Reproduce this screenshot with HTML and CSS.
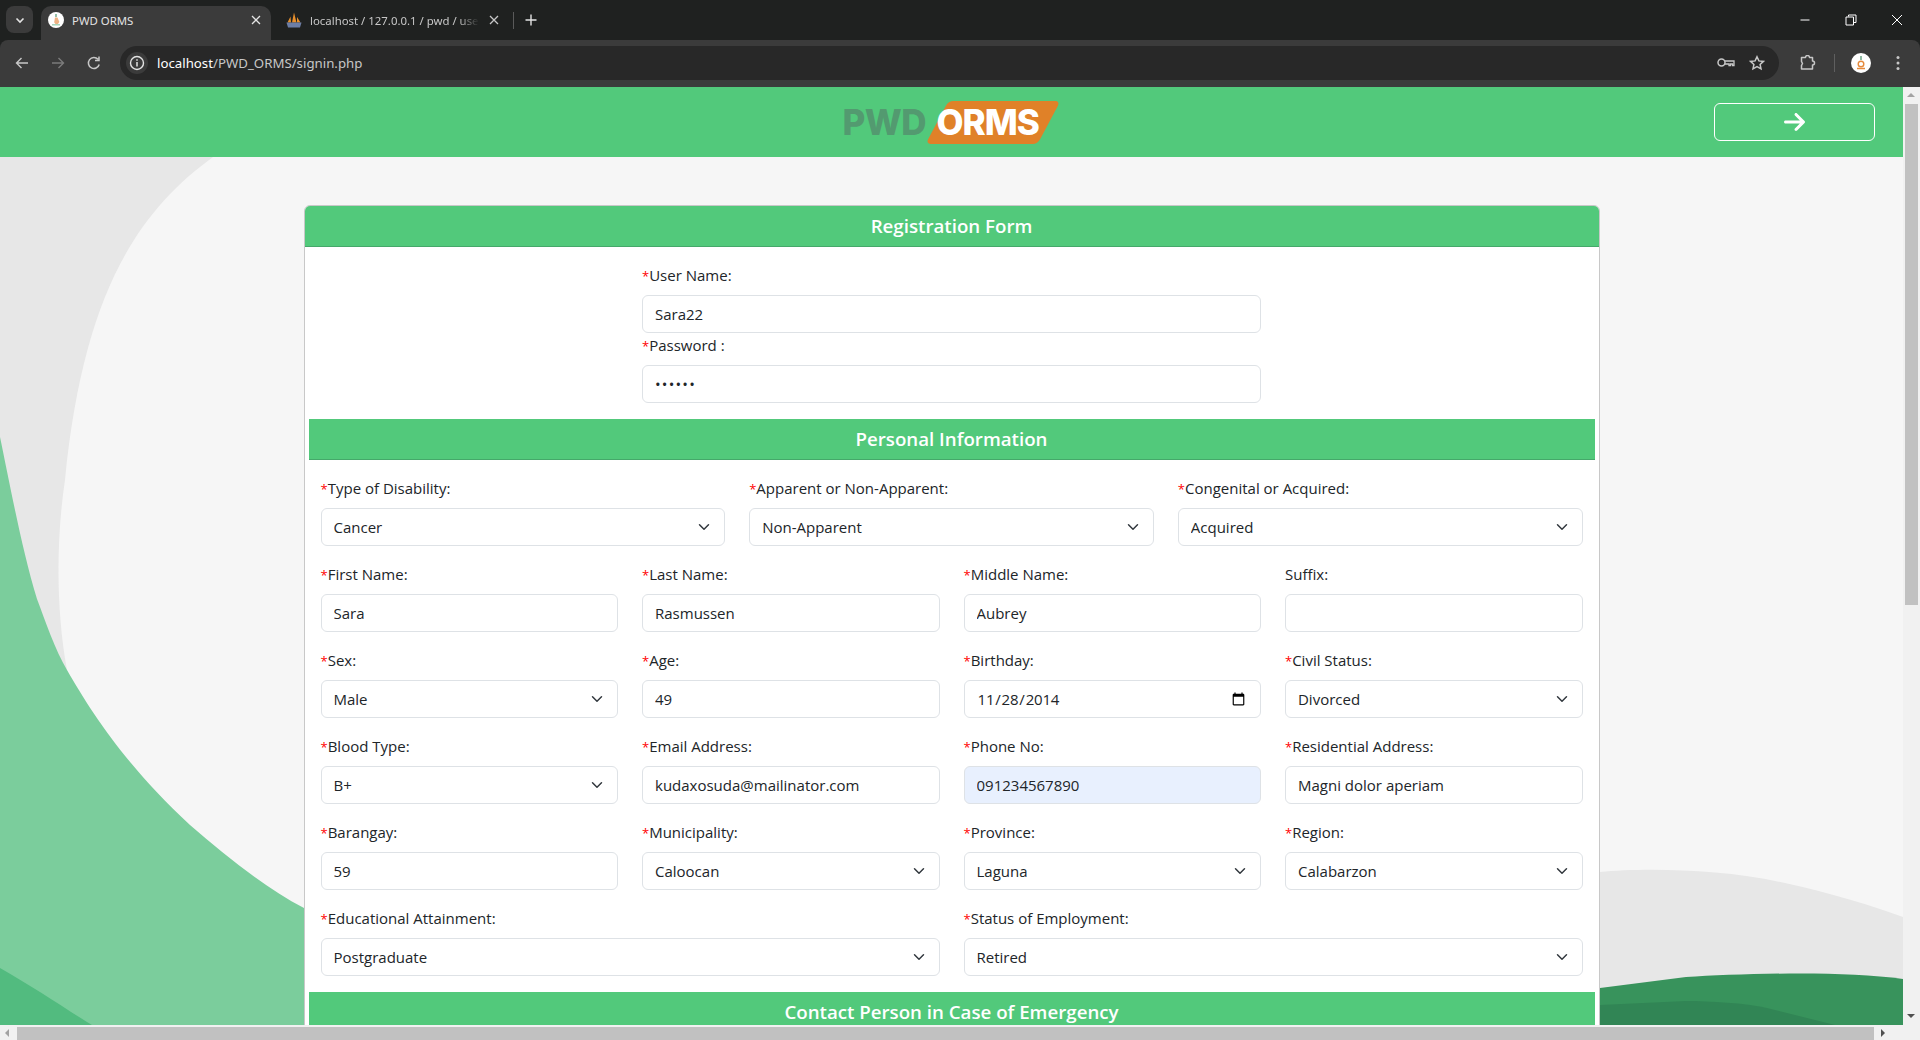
FILE: index.html
```html
<!DOCTYPE html>
<html lang="en">
<head>
    <meta charset="UTF-8">
    <title>PWD ORMS</title>
    <link rel="stylesheet" href="styles.css">
</head>
<body>
<div class="browser">

    <div class="tabstrip">
        <div class="tab-search">
            <svg width="12" height="12" viewBox="0 0 12 12"><path d="M2.5 4.5 6 8l3.5-3.5" fill="none" stroke="#e3e3e3" stroke-width="1.6"/></svg>
        </div>
        <div class="tab tab-active">
            <svg class="favicon" width="16" height="16" viewBox="0 0 16 16"><circle cx="8" cy="8" r="8" fill="#fff"/><path d="M8 2v3" stroke="#6aa585" stroke-width="1.4"/><path d="M7 5.500h2.500l1 2.500a2.500 2.500 0 1 1-4 .5z" fill="#eeb183"/><path d="M4 12.800h8" stroke="#9fd0b4" stroke-width="1.400"/></svg>
            <span class="tab-title">PWD ORMS</span>
            <svg class="tab-close" width="10" height="10" viewBox="0 0 10 10"><path d="M1 1l8 8M9 1l-8 8" stroke="#e3e3e3" stroke-width="1.3"/></svg>
        </div>
        <div class="tab">
            <svg class="favicon" width="16" height="16" viewBox="0 0 16 16"><path d="M1.500 10.500 4.500 4.500l.5 6zM6 10.500 8 .5l2.500 10zM11 10.500l0-5.500 3.500 5.500z" fill="#e8902c"/><path d="M.5 10.500h15L14 15.500H2z" fill="#6c7ea6"/></svg>
            <span class="tab-title tab-fade">localhost / 127.0.0.1 / pwd / use</span>
            <svg class="tab-close" width="10" height="10" viewBox="0 0 10 10"><path d="M1 1l8 8M9 1l-8 8" stroke="#c7c7c7" stroke-width="1.3"/></svg>
        </div>
        <div class="tab-sep"></div>
        <svg class="tab-new" width="12" height="12" viewBox="0 0 12 12"><path d="M6 .5v11M.5 6h11" stroke="#e3e3e3" stroke-width="1.4"/></svg>
        <div class="window-btns">
            <svg width="12" height="12" viewBox="0 0 12 12"><path d="M1.500 6h9" stroke="#fff"/></svg>
            <svg width="12" height="12" viewBox="0 0 12 12"><path d="M3.500 2.500V1h7.500v7.500H9M1 3h7.500v8H1z" fill="none" stroke="#fff"/></svg>
            <svg width="12" height="12" viewBox="0 0 12 12"><path d="M1 1l10 10M11 1 1 11" stroke="#fff"/></svg>
        </div>
    </div>

    <div class="toolbar">
        <svg class="nav-icon" width="16" height="16" viewBox="0 0 16 16"><path d="M14 8H2.500M7.500 3l-5 5 5 5" fill="none" stroke="#c7c7c7" stroke-width="1.400"/></svg>
        <svg class="nav-icon" width="16" height="16" viewBox="0 0 16 16"><path d="M2 8h11.500M8.500 3l5 5-5 5" fill="none" stroke="#7b7b7b" stroke-width="1.400"/></svg>
        <svg class="nav-icon" width="16" height="16" viewBox="0 0 16 16"><path d="M13.200 9.500A5.500 5.500 0 1 1 12 4.300M13 1.500V5.500H9" fill="none" stroke="#c7c7c7" stroke-width="1.500"/></svg>
        <div class="omnibox">
            <div class="info-bubble">
                <svg width="16" height="16" viewBox="0 0 16 16"><circle cx="8" cy="8" r="6.500" fill="none" stroke="#e3e3e3" stroke-width="1.400"/><path d="M8 7v4.500M8 4.300v1.500" stroke="#e3e3e3" stroke-width="1.500"/></svg>
            </div>
            <div class="url"><span class="url-host">localhost</span>/PWD_ORMS/signin.php</div>
            <svg class="omni-key" width="18" height="12" viewBox="0 0 18 12"><circle cx="4.500" cy="5.500" r="3.500" fill="none" stroke="#c7c7c7" stroke-width="1.500"/><path d="M8 4h9v4.500h-1.500V7h-2v1.500H12V7H8" fill="none" stroke="#c7c7c7" stroke-width="1.300"/></svg>
            <svg class="omni-star" width="16" height="16" viewBox="0 0 16 16"><path d="M8 1.800l1.900 4.100 4.500.5-3.300 3 .9 4.500L8 11.700l-4 2.200.9-4.500-3.300-3 4.500-.5z" fill="none" stroke="#c7c7c7" stroke-width="1.500"/></svg>
        </div>
        <svg class="ext-icon" width="16" height="16" viewBox="0 0 16 16"><path d="M1.500 2.500h4a2 2 0 0 1 4 0h3v3.500a2 2 0 0 1 0 4v4h-11v-3.500l1-2-1-2z" fill="none" stroke="#c7c7c7" stroke-width="1.500" stroke-linejoin="round"/></svg>
        <div class="toolbar-sep"></div>
        <svg class="avatar" width="20" height="20" viewBox="0 0 20 20"><circle cx="10" cy="10" r="10" fill="#fff"/><path d="M10 3v4" stroke="#6aa585" stroke-width="1.500"/><circle cx="10" cy="11" r="2.800" fill="none" stroke="#e58a3c" stroke-width="1.400"/><path d="M6 15.500h8" stroke="#e58a3c" stroke-width="1.500"/></svg>
        <svg class="menu-dots" width="4" height="16" viewBox="0 0 4 16"><circle cx="2" cy="2.500" r="1.500" fill="#c7c7c7"/><circle cx="2" cy="8" r="1.500" fill="#c7c7c7"/><circle cx="2" cy="13.500" r="1.500" fill="#c7c7c7"/></svg>
    </div>

    <div class="viewport">
        <div class="page">
            <svg class="page-bg" viewBox="0 87 1903 938" width="1903" height="938">
                <rect x="0" y="87" width="1903" height="938" fill="#f6f6f6"/>
                <path d="M0 157H213C133 215 83 300 65 480 56 540 56 610 67 670L0 600z" fill="#e7e7e7"/>
                <path d="M0 437C10 485 22 550 37 599 45 620 55 650 67 670 90 710 125 765 190 825 225 855 265 888 304 908V1025H0z" fill="#7bcd9c"/>
                <path d="M0 968C30 985 60 1005 87 1022L92 1025H0z" fill="#52bb7f"/>
                <path d="M1600 872C1640 868 1720 868 1785 883 1830 893 1870 905 1903 917V1025H1600z" fill="#e7e7e7"/>
                <path d="M1600 988 1686 977C1740 974 1840 970 1903 979V1025H1600z" fill="#38935c"/>
                <path d="M1600 1005 1686 1001C1710 1001 1745 1003 1767 1008L1835 1025H1600z" fill="#318555"/>
            </svg>

            <header class="site-header">
                <div class="logo">
                    <span class="logo-pwd">PWD</span>
                    <span class="logo-orms"><span class="logo-orms-text">ORMS</span></span>
                </div>
                <button class="btn-next" type="button">
                    <svg width="21" height="24" viewBox="0 0 448 512"><path fill="#fff" d="M438.6 278.6c12.5-12.5 12.5-32.8 0-45.3l-160-160c-12.5-12.5-32.8-12.5-45.3 0s-12.5 32.8 0 45.3L338.8 224 32 224c-17.7 0-32 14.3-32 32s14.3 32 32 32l306.700 0L233.4 393.4c-12.5 12.5-12.5 32.8 0 45.3s32.8 12.5 45.3 0l160-160z"/></svg>
                </button>
            </header>

            <div class="card">
                <h5 class="card-header">Registration Form</h5>
                <form class="card-body">
                    <div class="grid">
                        <div class="field field-tight col-center">
                            <label><span class="req">*</span>User Name:</label>
                            <input type="text" value="Sara22">
                        </div>
                        <div class="field col-center">
                            <label><span class="req">*</span>Password :</label>
                            <input type="password" value="Sara22">
                        </div>
                    </div>

                    <h5 class="section-title">Personal Information</h5>

                    <div class="grid">
                        <div class="field col-4">
                            <label><span class="req">*</span>Type of Disability:</label>
                            <select><option>Cancer</option></select>
                        </div>
                        <div class="field col-4">
                            <label><span class="req">*</span>Apparent or Non-Apparent:</label>
                            <select><option>Non-Apparent</option></select>
                        </div>
                        <div class="field col-4">
                            <label><span class="req">*</span>Congenital or Acquired:</label>
                            <select><option>Acquired</option></select>
                        </div>

                        <div class="field col-3">
                            <label><span class="req">*</span>First Name:</label>
                            <input type="text" value="Sara">
                        </div>
                        <div class="field col-3">
                            <label><span class="req">*</span>Last Name:</label>
                            <input type="text" value="Rasmussen">
                        </div>
                        <div class="field col-3">
                            <label><span class="req">*</span>Middle Name:</label>
                            <input type="text" value="Aubrey">
                        </div>
                        <div class="field col-3">
                            <label>Suffix:</label>
                            <input type="text">
                        </div>

                        <div class="field col-3">
                            <label><span class="req">*</span>Sex:</label>
                            <select><option>Male</option></select>
                        </div>
                        <div class="field col-3">
                            <label><span class="req">*</span>Age:</label>
                            <input type="text" value="49">
                        </div>
                        <div class="field col-3">
                            <label><span class="req">*</span>Birthday:</label>
                            <input type="date" value="2014-11-28">
                        </div>
                        <div class="field col-3">
                            <label><span class="req">*</span>Civil Status:</label>
                            <select><option>Divorced</option></select>
                        </div>

                        <div class="field col-3">
                            <label><span class="req">*</span>Blood Type:</label>
                            <select><option>B+</option></select>
                        </div>
                        <div class="field col-3">
                            <label><span class="req">*</span>Email Address:</label>
                            <input type="text" value="kudaxosuda@mailinator.com">
                        </div>
                        <div class="field col-3">
                            <label><span class="req">*</span>Phone No:</label>
                            <input class="autofilled" type="text" value="091234567890">
                        </div>
                        <div class="field col-3">
                            <label><span class="req">*</span>Residential Address:</label>
                            <input type="text" value="Magni dolor aperiam">
                        </div>

                        <div class="field col-3">
                            <label><span class="req">*</span>Barangay:</label>
                            <input type="text" value="59">
                        </div>
                        <div class="field col-3">
                            <label><span class="req">*</span>Municipality:</label>
                            <select><option>Caloocan</option></select>
                        </div>
                        <div class="field col-3">
                            <label><span class="req">*</span>Province:</label>
                            <select><option>Laguna</option></select>
                        </div>
                        <div class="field col-3">
                            <label><span class="req">*</span>Region:</label>
                            <select><option>Calabarzon</option></select>
                        </div>

                        <div class="field col-6">
                            <label><span class="req">*</span>Educational Attainment:</label>
                            <select><option>Postgraduate</option></select>
                        </div>
                        <div class="field col-6">
                            <label><span class="req">*</span>Status of Employment:</label>
                            <select><option>Retired</option></select>
                        </div>
                    </div>

                    <h5 class="section-title">Contact Person in Case of Emergency</h5>
                </form>
            </div>
        </div>

        <div class="vscroll">
            <div class="arrow arrow-up"></div>
            <div class="vscroll-track"><div class="vscroll-thumb"></div></div>
            <div class="arrow arrow-down"></div>
        </div>
    </div>

    <div class="hscroll">
        <div class="arrow arrow-left"></div>
        <div class="hscroll-thumb"></div>
        <div class="arrow arrow-right"></div>
    </div>
</div>
</body>
</html>
```

FILE: styles.css
```css
* {
    box-sizing: border-box;
}
html, body {
    margin: 0;
    height: 100%;
    overflow: hidden;
}
body {
    font-family: "Open Sans", "Noto Sans", sans-serif;
    font-size: 15px;
    color: #212529;
}
.browser {
    display: flex;
    flex-direction: column;
    height: 1040px;
    background: #1f2120;
}

/* tab strip */
.tabstrip {
    display: flex;
    align-items: flex-end;
    height: 40px;
    padding-left: 6px;
    flex-shrink: 0;
}
.tab-search {
    width: 27px;
    height: 27px;
    margin-bottom: 7px;
    border-radius: 8px;
    background: #3b3b3b;
    display: flex;
    align-items: center;
    justify-content: center;
}
.tab {
    display: flex;
    align-items: center;
    width: 242px;
    height: 34px;
    padding: 0 14px 6px 15px;
    font-family: "Noto Sans", sans-serif;
    font-size: 11.4px;
    color: #c7c7c7;
}
.tab-active {
    width: 230px;
    margin-left: 8px;
    padding: 0 10px 6px 7px;
    background: #3b3b3b;
    border-radius: 10px 10px 0 0;
    color: #e3e3e3;
}
.tab-title {
    margin-left: 8px;
    white-space: nowrap;
}
.tab-fade {
    -webkit-mask-image: linear-gradient(to right, #000 88%, transparent);
    mask-image: linear-gradient(to right, #000 88%, transparent);
}
.tab-close {
    margin-left: auto;
}
.tab-sep {
    width: 1px;
    height: 17px;
    margin-bottom: 11px;
    background: #5a5a5a;
}
.tab-new {
    margin: 0 0 14px 11px;
}
.window-btns {
    display: flex;
    gap: 34px;
    margin-left: auto;
    padding-right: 17px;
    margin-bottom: 14px;
}

/* toolbar */
.toolbar {
    display: flex;
    align-items: center;
    height: 47px;
    flex-shrink: 0;
    padding: 0 20px 1px 14px;
    background: #3b3b3b;
    border-radius: 8px 8px 0 0;
}
.nav-icon {
    margin-right: 20px;
}
.nav-icon:nth-of-type(3) {
    margin-right: 18px;
}
.omnibox {
    display: flex;
    align-items: center;
    flex: 1;
    height: 34px;
    padding: 0 14px 0 6px;
    background: #282828;
    border-radius: 17px;
}
.info-bubble {
    display: flex;
    align-items: center;
    justify-content: center;
    width: 22px;
    height: 22px;
    border-radius: 50%;
    background: #3b3b3b;
}
.url {
    flex: 1;
    margin-left: 9px;
    font-family: "Noto Sans", sans-serif;
    font-size: 13.25px;
    color: #c7c7c7;
}
.url-host {
    color: #fff;
}
.omni-star {
    margin-left: 14px;
}
.ext-icon {
    margin-left: 21px;
}
.toolbar-sep {
    width: 1px;
    height: 18px;
    margin-left: 18px;
    background: #5f5f5f;
}
.avatar {
    margin-left: 16px;
}
.menu-dots {
    margin-left: 25px;
}

/* page area */
.viewport {
    display: flex;
    height: 938px;
    flex-shrink: 0;
}
.page {
    position: relative;
    width: 1903px;
    overflow: hidden;
    background: #f6f6f6;
}
.page-bg {
    position: absolute;
    left: 0;
    top: 0;
}
.site-header {
    position: relative;
    display: grid;
    grid-template-columns: 1fr auto 1fr;
    align-items: center;
    height: 70px;
    padding: 0 28px;
    background: #52c97b;
}
.logo {
    grid-column: 2;
    display: flex;
    align-items: center;
    width: 218px;
    font-family: "Inter", sans-serif;
    font-weight: 800;
    font-size: 35px;
}
.logo-pwd {
    width: 84px;
    flex-shrink: 0;
    color: #539a70;
    letter-spacing: -0.6px;
    white-space: nowrap;
}
.logo-orms {
    position: relative;
    display: block;
    width: 136px;
    flex-shrink: 0;
    margin-left: -2px;
    padding-left: 12px;
    height: 43px;
    line-height: 43px;
    letter-spacing: -1px;
    color: #fff;
}
.logo-orms::before {
    content: "";
    position: absolute;
    top: 0;
    bottom: 0;
    left: 12px;
    right: 12px;
    background: #e08128;
    border-radius: 5px;
    transform: skewX(-28deg);
}
.logo-orms-text {
    position: relative;
}
.btn-next {
    justify-self: end;
    display: flex;
    align-items: center;
    justify-content: center;
    width: 161px;
    height: 38px;
    background: transparent;
    border: 1px solid #fff;
    border-radius: 6px;
    padding: 0;
}

/* card */
.card {
    position: relative;
    width: 1296px;
    margin: 48px auto 0;
    background: #fff;
    border: 1px solid #c8c8c8;
    border-radius: 6px 6px 0 0;
}
.card-header {
    margin: 0;
    height: 41px;
    line-height: 40px;
    text-align: center;
    font-size: 18.7px;
    font-weight: 600;
    color: #fff;
    background: #52c97b;
    border-bottom: 1px solid #45a86a;
    border-radius: 5px 5px 0 0;
}
.card-body {
    padding: 16px 4px 0;
}
.section-title {
    margin: 0 0 16px;
    height: 41px;
    line-height: 40px;
    text-align: center;
    font-size: 18.7px;
    font-weight: 600;
    color: #fff;
    background: #52c97b;
    border-bottom: 1px solid #45a86a;
}
.grid {
    display: grid;
    grid-template-columns: repeat(12, 1fr);
    column-gap: 24px;
    padding: 0 12px;
}
.field {
    margin-bottom: 16px;
}
.field-tight {
    margin-bottom: 0;
}
.col-center {
    grid-column: 4 / span 6;
}
.col-3 {
    grid-column: span 3;
}
.col-4 {
    grid-column: span 4;
}
.col-6 {
    grid-column: span 6;
}
.field label {
    display: block;
    height: 24px;
    line-height: 24px;
    margin-bottom: 8px;
}
.req {
    color: #f00;
    font-size: 13px;
}
.field input,
.field select {
    display: block;
    width: 100%;
    height: 38px;
    padding: 6px 12px;
    font-family: inherit;
    font-size: 15px;
    color: #212529;
    background-color: #fff;
    border: 1px solid #dee2e6;
    border-radius: 6px;
    outline: none;
}
.field input[type="password"] {
    letter-spacing: 1.2px;
}
.field input[type="date"] {
    letter-spacing: -0.2px;
}
.field select {
    appearance: none;
    -webkit-appearance: none;
    padding-right: 36px;
    background-image: url("data:image/svg+xml,%3csvg xmlns='http://www.w3.org/2000/svg' viewBox='0 0 16 16'%3e%3cpath fill='none' stroke='%23343a40' stroke-linecap='round' stroke-linejoin='round' stroke-width='2' d='m2 5 6 6 6-6'/%3e%3c/svg%3e");
    background-repeat: no-repeat;
    background-position: right 12px center;
    background-size: 16px 12px;
}
.field input.autofilled {
    background-color: #e8f0fe;
}

/* fake scrollbars */
.vscroll {
    display: flex;
    flex-direction: column;
    width: 17px;
    background: #f1f1f1;
}
.vscroll-track {
    flex: 1;
    padding: 0 2px;
}
.vscroll-thumb {
    height: 501px;
    background: #c1c1c1;
}
.hscroll {
    display: flex;
    align-items: center;
    flex: 1;
    background: #f1f1f1;
}
.hscroll-thumb {
    width: 1857px;
    height: 13px;
    background: #c1c1c1;
}
.arrow {
    flex-shrink: 0;
    width: 17px;
    height: 17px;
    position: relative;
}
.arrow::after {
    content: "";
    position: absolute;
    left: 4px;
    top: 4px;
    border: 4px solid transparent;
}
.arrow-up::after {
    top: 2px;
    border-bottom-color: #a3a3a3;
}
.arrow-down::after {
    top: 6px;
    border-top-color: #505050;
}
.arrow-left::after {
    left: 1px;
    border-right-color: #a3a3a3;
}
.arrow-right::after {
    left: 7px;
    border-left-color: #505050;
}
```
